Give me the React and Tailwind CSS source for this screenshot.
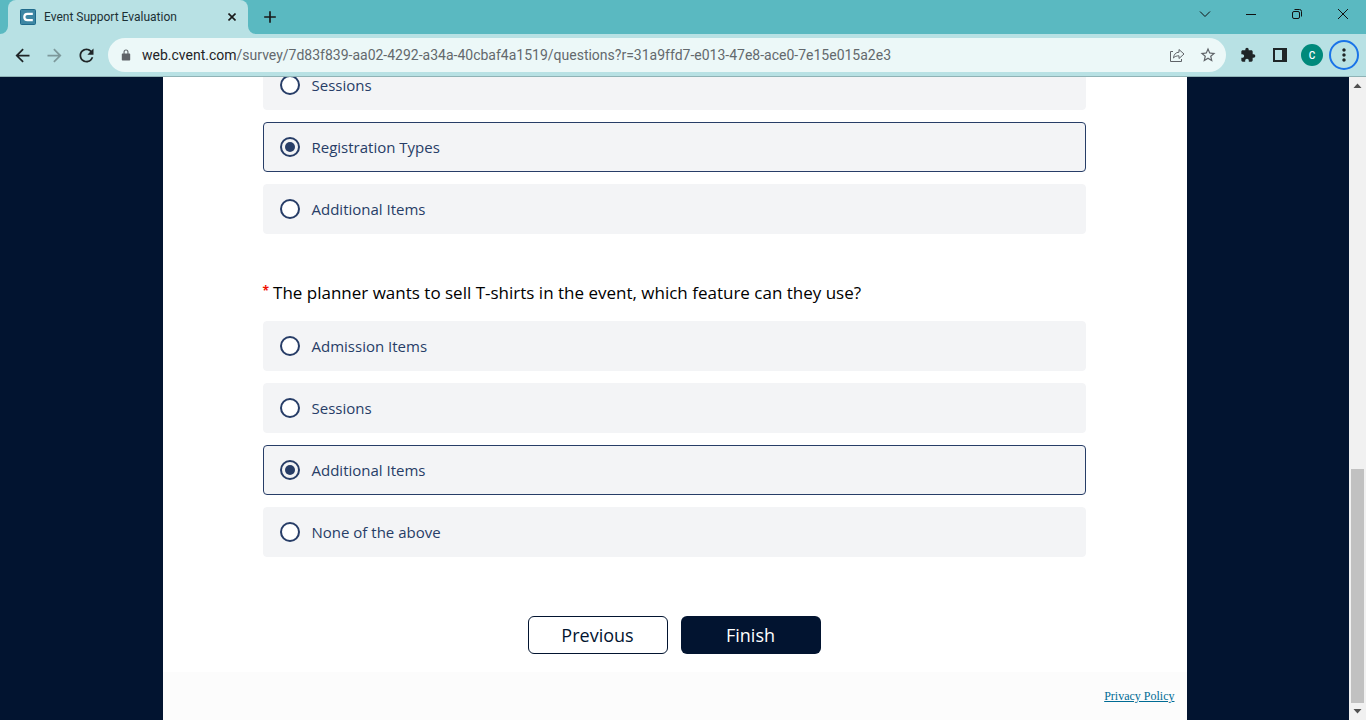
import { useState } from "react";
import {
  MdAdd,
  MdArrowBack,
  MdArrowForward,
  MdExtension,
  MdMoreVert,
  MdRefresh,
  MdStarBorder,
} from "react-icons/md";

const featureOptions = ["Sessions", "Registration Types", "Additional Items"];
const shirtOptions = ["Admission Items", "Sessions", "Additional Items", "None of the above"];

function Favicon() {
  return (
    <svg viewBox="0 0 16 16" className="size-4 shrink-0" aria-hidden="true">
      <rect x="0.5" y="0.5" width="15" height="15" rx="1" fill="#3d86a3" stroke="#1f6a8b" />
      <path
        d="M12.800 4.800H7.500Q4.300 4.800 4.300 8t3.200 3.200h5.300"
        fill="none"
        stroke="#fff"
        strokeWidth="2.200"
      />
    </svg>
  );
}

function TabFlare({ className }) {
  return (
    <svg viewBox="0 0 8 8" className={className} aria-hidden="true">
      <path d="M8 0v8H0a8 8 0 0 0 8-8z" fill="#b8e1e4" />
    </svg>
  );
}

function WindowButton({ label, children }) {
  return (
    <button type="button" aria-label={label} className="flex w-[46px] items-center justify-center">
      <svg
        viewBox="0 0 12 12"
        className="size-3"
        fill="none"
        stroke="#111"
        strokeWidth="1"
        aria-hidden="true"
      >
        {children}
      </svg>
    </button>
  );
}

function TabStrip() {
  return (
    <div className="flex h-[34px] bg-[#5ab9c1] pl-2">
      <div className="relative flex w-60 items-center rounded-t-lg bg-[#b8e1e4] pr-3 pl-3">
        <TabFlare className="absolute bottom-0 -left-2 size-2" />
        <TabFlare className="absolute -right-2 bottom-0 size-2 -scale-x-100" />
        <Favicon />
        <span className="ml-2 flex-1 text-xs text-[#1c3034]">Event Support Evaluation</span>
        <button type="button" aria-label="Close tab">
          <svg viewBox="0 0 8 8" className="size-2" stroke="#1a1a1a" strokeWidth="1.600" aria-hidden="true">
            <path d="M0.500 0.500l7 7M7.500 0.500l-7 7" />
          </svg>
        </button>
      </div>
      <button type="button" aria-label="New tab" className="ml-3 flex items-center">
        <MdAdd className="size-5 text-[#1a1a1a]" />
      </button>
      <div className="ml-auto flex h-7">
        <WindowButton label="Search tabs">
          <path d="M1 3.500l5 5 5-5" />
        </WindowButton>
        <WindowButton label="Minimize">
          <path d="M1 6.500h10" />
        </WindowButton>
        <WindowButton label="Restore">
          <rect x="1.500" y="3.500" width="7" height="7" rx="1.500" />
          <path d="M3.500 1.500h5a2 2 0 0 1 2 2v5" />
        </WindowButton>
        <WindowButton label="Close">
          <path d="M1 1l10 10M11 1L1 11" />
        </WindowButton>
      </div>
    </div>
  );
}

function Toolbar() {
  return (
    <div className="flex h-[43px] items-center border-b border-[#8fb3b6] bg-[#b8e1e4] pr-[7px] pl-3">
      <button type="button" aria-label="Back">
        <MdArrowBack className="size-[21px] text-[#1f2527]" />
      </button>
      <button type="button" aria-label="Forward" className="ml-[11px]">
        <MdArrowForward className="size-[21px] text-[#7d999b]" />
      </button>
      <button type="button" aria-label="Reload" className="ml-[11px]">
        <MdRefresh className="size-[21px] text-[#1f2527]" />
      </button>
      <div className="ml-[11px] flex h-[34px] flex-1 items-center rounded-full bg-[#ecf8f8] pr-[9px] pl-3">
        <svg viewBox="0 0 12 12" className="size-3" aria-hidden="true">
          <path
            d="M2.500 4.500H3.500V3a2.500 2.500 0 0 1 5 0v1.500h1a.7.7 0 0 1 .7.7v5.600a.7.7 0 0 1-.7.7h-7a.7.7 0 0 1-.7-.7V5.200a.7.7 0 0 1 .7-.7zM4.600 4.500h2.800V3a1.400 1.400 0 0 0-2.800 0z"
            fill="#5f6368"
            fillRule="evenodd"
          />
        </svg>
        <div className="ml-2.5 flex-1 text-sm text-[#63696d]">
          <span className="text-[#1f2427]">web.cvent.com</span>
          /survey/7d83f839-aa02-4292-a34a-40cbaf4a1519/questions?r=31a9ffd7-e013-47e8-ace0-7e15e015a2e3
        </div>
        <button type="button" aria-label="Share this page">
          <svg viewBox="0 0 16 16" className="size-4" fill="none" stroke="#5f6368" aria-hidden="true">
            <path d="M4 4.500H1.500v10h11V12" />
            <path d="M4.500 11c.4-3.800 2.300-5.700 5.500-5.800V2.500l5 4.500-5 4.500V8.800C7.500 8.800 5.700 9.500 4.500 11z" />
          </svg>
        </button>
        <button type="button" aria-label="Bookmark this tab" className="ml-3.5">
          <MdStarBorder className="size-[18px] text-[#5f6368]" />
        </button>
      </div>
      <button type="button" aria-label="Extensions" className="ml-3.5">
        <MdExtension className="size-4 text-[#1f2527]" />
      </button>
      <button type="button" aria-label="Side panel" className="ml-[17px]">
        <svg viewBox="0 0 14 14" className="size-3.5" aria-hidden="true">
          <path d="M0 0h14v14H0zM2 2v10h7V2z" fill="#1f2527" fillRule="evenodd" />
        </svg>
      </button>
      <button
        type="button"
        aria-label="Profile"
        className="ml-3.5 flex size-[22px] items-center justify-center rounded-full bg-[#00897b] text-[10px] font-medium text-white"
      >
        C
      </button>
      <button
        type="button"
        aria-label="Menu"
        className="ml-1.5 flex size-[30px] items-center justify-center rounded-full border-2 border-[#1a73e8]"
      >
        <MdMoreVert className="size-5 text-[#1f2527]" />
      </button>
    </div>
  );
}

function Options({ name, options, value, onChange }) {
  return (
    <div className="flex flex-col gap-3">
      {options.map((option) => (
        <label
          key={option}
          className="flex h-[50px] items-center gap-3 rounded-sm border border-[#f3f4f6] bg-[#f3f4f6] px-4 text-[15px] leading-4 text-[#273d67] has-checked:border-[#273d67]"
        >
          <input
            type="radio"
            name={name}
            value={option}
            checked={value === option}
            onChange={() => onChange(option)}
            className="size-5 shrink-0 appearance-none rounded-full border-2 border-[#273d67] bg-white bg-clip-padding p-[3px] checked:bg-[#273d67] checked:bg-clip-content"
          />
          {option}
        </label>
      ))}
    </div>
  );
}

function ScrollBar() {
  return (
    <div className="flex w-[17px] shrink-0 flex-col items-center bg-[#f1f1f1]" aria-hidden="true">
      <svg viewBox="0 0 17 17" className="size-[17px]">
        <path d="M4.500 11l4-4.500 4 4.500z" fill="#505050" />
      </svg>
      <div className="flex w-[13px] flex-1 flex-col">
        <div className="flex-8" />
        <div className="flex-5 bg-[#c1c1c1]" />
      </div>
      <svg viewBox="0 0 17 17" className="size-[17px]">
        <path d="M4.500 6l4 4.500 4-4.500z" fill="#505050" />
      </svg>
    </div>
  );
}

export default function App() {
  const [feature, setFeature] = useState("Registration Types");
  const [shirts, setShirts] = useState("Additional Items");

  return (
    <div className="flex h-screen flex-col overflow-hidden font-['Open_Sans',sans-serif]">
      <header className="shrink-0 font-[Roboto,sans-serif]">
        <TabStrip />
        <Toolbar />
      </header>
      <div className="flex min-h-0 flex-1">
        <main className="flex-1 overflow-hidden bg-[#021430]">
          <form
            className="mx-auto -mt-[17px] flex min-h-[calc(100%+17px)] max-w-5xl flex-col bg-white"
            onSubmit={(event) => event.preventDefault()}
          >
            <div className="pr-[101px] pl-[100px]">
              <fieldset aria-label="Registration feature">
                <Options name="feature" options={featureOptions} value={feature} onChange={setFeature} />
              </fieldset>
              <fieldset className="mt-[45px]">
                <legend className="flex gap-1 pb-3.5 text-[17px] leading-7 text-black">
                  <span className="text-xs leading-6 font-bold text-[#f01000]">*</span>
                  <span>The planner wants to sell T-shirts in the event, which feature can they use?</span>
                </legend>
                <Options name="shirts" options={shirtOptions} value={shirts} onChange={setShirts} />
              </fieldset>
              <div className="mt-[59px] mb-[18px] flex justify-center gap-[13px] text-lg">
                <button type="button" className="h-[38px] w-[140px] rounded-md border border-[#021430] text-[#021430]">
                  Previous
                </button>
                <button type="submit" className="h-[38px] w-[140px] rounded-md bg-[#021430] text-white">
                  Finish
                </button>
              </div>
            </div>
            <footer className="flex-1 bg-[#fcfcfc] px-3 pt-4 text-right font-['Liberation_Serif',serif] text-xs">
              <a href="#privacy" className="text-[#006b94] underline">
                Privacy Policy
              </a>
            </footer>
          </form>
        </main>
        <ScrollBar />
      </div>
    </div>
  );
}
